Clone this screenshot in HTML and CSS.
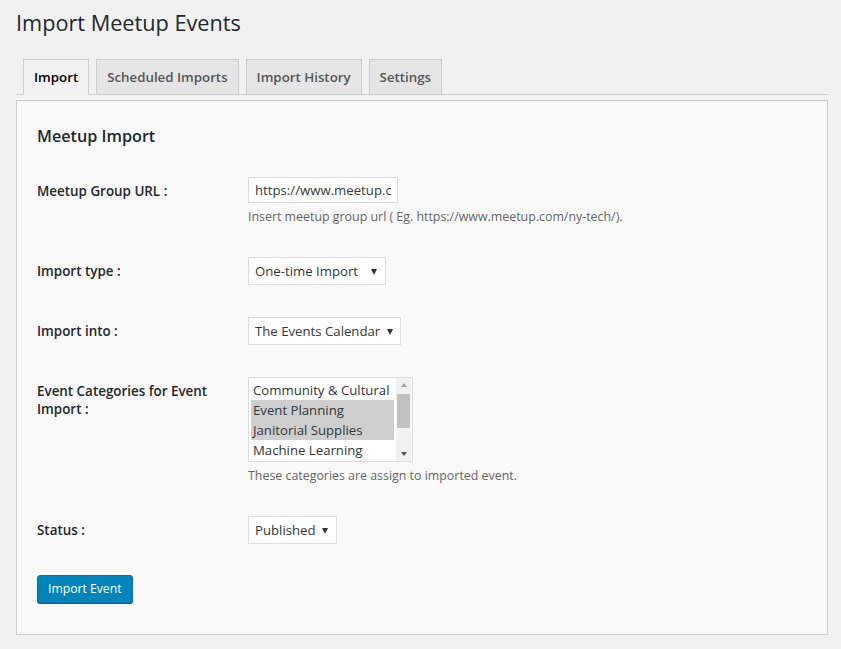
FILE: index.html
```html
<!DOCTYPE html>
<html lang="en">
<head>
<meta charset="utf-8">
<title>Import Meetup Events</title>
<link rel="stylesheet" href="styles.css">
</head>
<body>
<div class="wrap">
  <h1 class="page-title">Import Meetup Events</h1>
  <nav class="tabs">
    <a class="tab tab-active">Import</a>
    <a class="tab">Scheduled Imports</a>
    <a class="tab">Import History</a>
    <a class="tab">Settings</a>
  </nav>
  <div class="panel">
    <h3 class="panel-title">Meetup Import</h3>
    <div class="form">
      <div class="row row-url">
        <div class="label">Meetup Group URL :</div>
        <div class="field">
          <input class="text-input" type="text" value="https://www.meetup.com/ny-tech/">
          <p class="desc">Insert meetup group url ( Eg. https://www.meetup.com/ny-tech/).</p>
        </div>
      </div>
      <div class="row">
        <div class="label">Import type :</div>
        <div class="field">
          <div class="select select-type"><span>One-time Import</span><span class="caret"></span></div>
        </div>
      </div>
      <div class="row">
        <div class="label">Import into :</div>
        <div class="field">
          <div class="select select-into"><span>The Events Calendar</span><span class="caret"></span></div>
        </div>
      </div>
      <div class="row row-cats">
        <div class="label">Event Categories for Event Import :</div>
        <div class="field">
          <div class="listbox">
            <div class="options">
              <div class="option">Community &amp; Cultural</div>
              <div class="option option-selected">Event Planning</div>
              <div class="option option-selected">Janitorial Supplies</div>
              <div class="option">Machine Learning</div>
            </div>
            <div class="scrollbar">
              <span class="arrow arrow-up"></span>
              <span class="thumb"></span>
              <span class="arrow arrow-down"></span>
            </div>
          </div>
          <p class="desc">These categories are assign to imported event.</p>
        </div>
      </div>
      <div class="row">
        <div class="label">Status :</div>
        <div class="field">
          <div class="select select-status"><span>Published</span><span class="caret"></span></div>
        </div>
      </div>
    </div>
    <button class="button-primary" type="button">Import Event</button>
  </div>
</div>
</body>
</html>
```

FILE: styles.css
```css
* { box-sizing: border-box; }

html, body {
  margin: 0;
  padding: 0;
  background: #f1f1f1;
}

body {
  font-family: "Open Sans", "Noto Sans", sans-serif;
  font-size: 13px;
  color: #23282d;
}

.wrap {
  padding: 0 13px 0 16px;
}

.page-title {
  margin: 0;
  padding-top: 8px;
  font-size: 21.7px;
  font-weight: 400;
  line-height: 29px;
  color: #23282d;
}

.tabs {
  display: flex;
  margin-top: 22px;
  border-bottom: 1px solid #ccc;
  height: 36px;
}

.tab {
  display: block;
  margin-left: 7px;
  height: 36px;
  padding: 0 10px;
  border: 1px solid #ccc;
  background: #e5e5e5;
  color: #555;
  font-size: 13.3px;
  font-weight: 600;
  line-height: 34px;
}

.tab-active {
  background: #f1f1f1;
  border-bottom-color: #f1f1f1;
  color: #000;
}

.panel {
  margin-top: 5px;
  background: #f9f9f9;
  border: 1px solid #ccc;
  padding: 24px 20px 31px;
}

.panel-title {
  margin: 0 0 15px;
  font-size: 16.2px;
  font-weight: 600;
  line-height: 22px;
  color: #23282d;
}

.row {
  display: grid;
  grid-template-columns: 211px 1fr;
  height: 60px;
}

.row-url { height: 80px; }
.row-cats { height: 139px; }

.label {
  padding: 20px 20px 0 0;
  font-size: 13.4px;
  font-weight: 600;
  line-height: 18px;
  color: #23282d;
}

.field {
  padding-top: 15px;
}

.text-input {
  display: block;
  width: 150px;
  height: 26px;
  margin: 0;
  padding: 0 6px;
  border: 1px solid #ddd;
  background: #fff;
  font-family: inherit;
  font-size: 13.2px;
  color: #32373c;
  outline: none;
}

.desc {
  margin: 4px 0 0;
  font-size: 12.4px;
  line-height: 19px;
  color: #666;
}

.select {
  display: flex;
  align-items: center;
  justify-content: space-between;
  height: 28px;
  padding: 0 8px 0 6px;
  border: 1px solid #ddd;
  background: #fff;
  font-size: 13.2px;
  color: #32373c;
  white-space: nowrap;
}

.select-type { width: 138px; }
.select-into { width: 153px; padding-right: 7px; }
.select-status { width: 89px; padding-right: 8px; }

.caret {
  width: 0;
  height: 0;
  border-left: 3.5px solid transparent;
  border-right: 3.5px solid transparent;
  border-top: 6px solid #333;
  margin-top: 1px;
}

.listbox {
  display: flex;
  width: 165px;
  height: 85px;
  padding: 2px 1px 2px 2px;
  border: 1px solid #ddd;
  background: #fff;
}

.options {
  flex: 1;
  overflow: hidden;
}

.option {
  height: 20px;
  padding: 0 2px;
  font-size: 13.2px;
  line-height: 20px;
  color: #32373c;
  white-space: nowrap;
  overflow: hidden;
}

.option-selected {
  background: #cecece;
}

.scrollbar {
  display: flex;
  flex-direction: column;
  align-items: center;
  width: 15px;
  margin-left: 2px;
  margin-top: -2px;
  margin-bottom: -2px;
  background: #f1f1f1;
}

.arrow {
  width: 0;
  height: 0;
  border-left: 3.5px solid transparent;
  border-right: 3.5px solid transparent;
  margin: 5px 0;
}

.arrow-up {
  border-bottom: 4px solid #a3a3a3;
}

.arrow-down {
  border-top: 4px solid #505050;
  margin-top: auto;
}

.thumb {
  display: block;
  width: 13px;
  height: 34px;
  margin-top: 2px;
  background: #c1c1c1;
}

.button-primary {
  display: block;
  margin-top: 14px;
  height: 28px;
  padding: 0 10px 1px;
  border: 1px solid #0073aa;
  border-radius: 3px;
  background: #0085ba;
  box-shadow: 0 1px 0 #006799;
  color: #fff;
  font-family: inherit;
  font-size: 12.2px;
  line-height: 26px;
  cursor: pointer;
}
```
